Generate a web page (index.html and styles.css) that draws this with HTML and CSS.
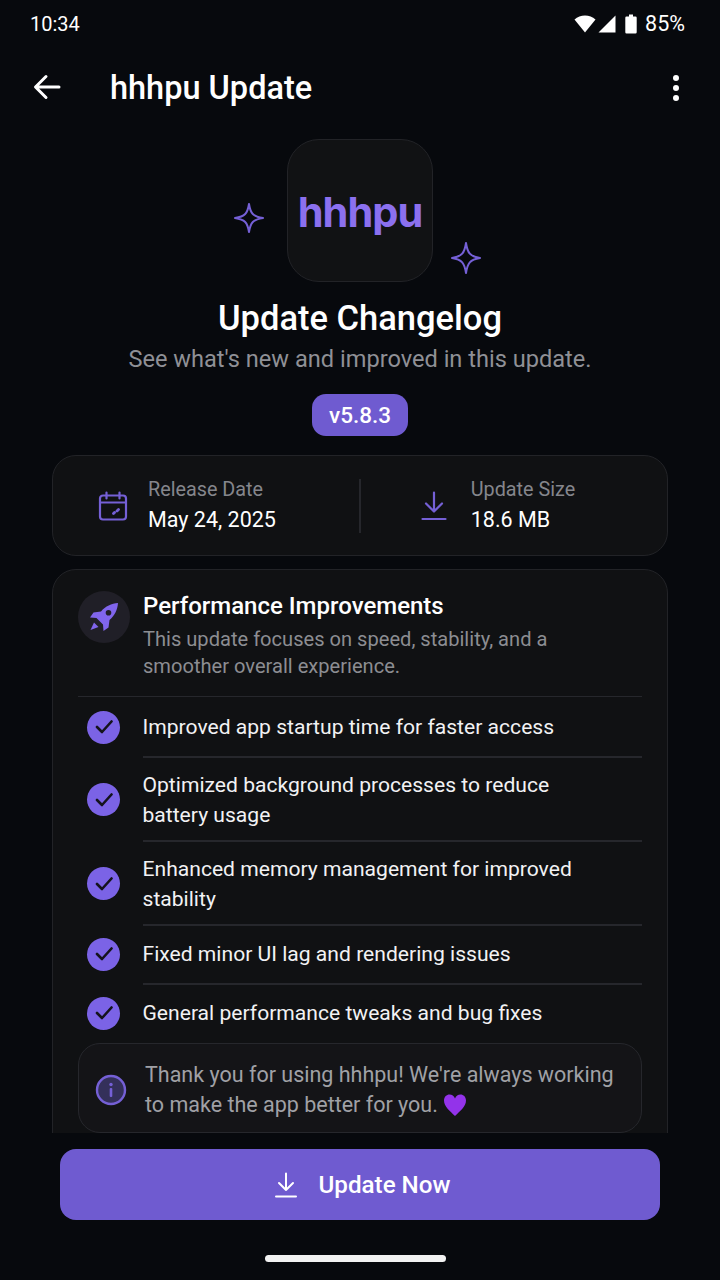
FILE: index.html
```html
<!DOCTYPE html>
<html lang="en">
<head>
  <meta charset="UTF-8" />
  <meta name="viewport" content="width=device-width, initial-scale=1.0"/>
  <title>hhhpu Update</title>
  <link rel="stylesheet" href="styles.css">
</head>
<body>
  <div class="status-bar">
    <span class="time">10:34</span>
    <div class="status-icons">
      <svg class="wifi" width="22" height="18" viewBox="0 0 22 18"><path d="M0.500 4.500C3.500 1.800 7 0.500 11 0.500s7.500 1.300 10.500 4L11 17.500z" fill="#fff"/></svg>
      <svg class="signal" width="18" height="18" viewBox="0 0 18 18"><path d="M17.500 0.500V17.500H0.500z" fill="#fff"/></svg>
      <svg class="batt" width="12" height="20" viewBox="0 0 12 20"><path d="M4 0.500h4v2h2.500a1.200 1.200 0 0 1 1.200 1.200V18.300a1.200 1.200 0 0 1-1.200 1.200H1.500a1.200 1.200 0 0 1-1.200-1.200V3.700a1.200 1.200 0 0 1 1.200-1.200H4z" fill="#fff"/></svg>
      <span class="battery">85%</span>
    </div>
  </div>

  <header class="toolbar">
    <svg class="back" width="28" height="26" viewBox="0 0 28 26" fill="none" stroke="#fff" stroke-width="3" stroke-linecap="round" stroke-linejoin="round"><path d="M26 13H3M13 2.500 2.500 13 13 23.500"/></svg>
    <h1>hhhpu Update</h1>
    <div class="menu"><i></i><i></i><i></i></div>
  </header>

  <main class="content">
    <div class="hero">
      <div class="logo-wrap">
        <svg class="sparkle sparkle-left" width="30" height="30" viewBox="0 0 30 30" fill="none" stroke="#7560d6" stroke-width="2" stroke-linejoin="round"><path d="M15 1C16.500 10.500 19 13.500 29 15 19 16.500 16.500 19.500 15 29 13.500 19.500 11 16.500 1 15 11 13.500 13.500 10.500 15 1z"/></svg>
        <div class="logo">hhhpu</div>
        <svg class="sparkle sparkle-right" width="30" height="32" viewBox="0 0 30 32" fill="none" stroke="#7560d6" stroke-width="2" stroke-linejoin="round"><path d="M15 1C16.500 11 19 14.500 29 16 19 17.500 16.500 21 15 31 13.500 21 11 17.500 1 16 11 14.500 13.500 11 15 1z"/></svg>
      </div>
      <h2>Update Changelog</h2>
      <p class="subtitle">See what's new and improved in this update.</p>
      <span class="version">v5.8.3</span>
    </div>

    <section class="info-card">
      <div class="info-cell">
        <svg class="info-icon" width="30" height="30" viewBox="0 0 30 30" fill="none" stroke="#7560d6" stroke-width="2.200" stroke-linecap="round" stroke-linejoin="round"><rect x="2" y="4.500" width="26" height="24" rx="3"/><path d="M2 11.500h26M8.500 1.500v6M21.500 1.500v6"/><path d="M15.500 22.500l1-1M19 20l1.500-1.500" stroke-width="2.800"/></svg>
        <div class="info-text">
          <span class="info-label">Release Date</span>
          <span class="info-value">May 24, 2025</span>
        </div>
      </div>
      <div class="info-divider"></div>
      <div class="info-cell info-cell-right">
        <svg class="info-icon" width="26" height="30" viewBox="0 0 26 30" fill="none" stroke="#7560d6" stroke-width="2.200" stroke-linecap="round" stroke-linejoin="round"><path d="M13 1.500V20M5 12.500l8 8 8-8M1.500 28h23"/></svg>
        <div class="info-text">
          <span class="info-label">Update Size</span>
          <span class="info-value">18.6 MB</span>
        </div>
      </div>
    </section>

    <section class="perf-card">
      <div class="perf-head">
        <div class="rocket">
          <svg width="30" height="30" viewBox="0 0 30 30"><path fill-rule="evenodd" d="M29 1C22.500 1.500 16.500 4 12 9.500L4.500 10.500 1 15.500 7.500 16 14 22.500 14.500 29 19.500 25.500 20.500 18C26 13.500 28.500 7.500 29 1zM19.500 8a2.800 2.800 0 1 1 0 5.600 2.800 2.800 0 0 1 0-5.600z" fill="#8065ec"/><path d="M5 20.500 9.500 25 1.500 28z" fill="#8065ec"/></svg>
        </div>
        <div class="perf-title">
          <h3>Performance Improvements</h3>
          <p>This update focuses on speed, stability, and a smoother overall experience.</p>
        </div>
      </div>

      <ul class="changes">
        <li class="one-line">
          <span class="check"><svg width="18" height="16" viewBox="0 0 18 16" fill="none" stroke="#14131c" stroke-width="2.600" stroke-linecap="round" stroke-linejoin="round"><path d="M2 8l5 5L16.500 2.500"/></svg></span>
          <span class="change-text">Improved app startup time for faster access</span>
        </li>
        <li class="two-line">
          <span class="check"><svg width="18" height="16" viewBox="0 0 18 16" fill="none" stroke="#14131c" stroke-width="2.600" stroke-linecap="round" stroke-linejoin="round"><path d="M2 8l5 5L16.500 2.500"/></svg></span>
          <span class="change-text">Optimized background processes to reduce battery usage</span>
        </li>
        <li class="two-line">
          <span class="check"><svg width="18" height="16" viewBox="0 0 18 16" fill="none" stroke="#14131c" stroke-width="2.600" stroke-linecap="round" stroke-linejoin="round"><path d="M2 8l5 5L16.500 2.500"/></svg></span>
          <span class="change-text">Enhanced memory management for improved stability</span>
        </li>
        <li class="one-line">
          <span class="check"><svg width="18" height="16" viewBox="0 0 18 16" fill="none" stroke="#14131c" stroke-width="2.600" stroke-linecap="round" stroke-linejoin="round"><path d="M2 8l5 5L16.500 2.500"/></svg></span>
          <span class="change-text">Fixed minor UI lag and rendering issues</span>
        </li>
        <li class="one-line">
          <span class="check"><svg width="18" height="16" viewBox="0 0 18 16" fill="none" stroke="#14131c" stroke-width="2.600" stroke-linecap="round" stroke-linejoin="round"><path d="M2 8l5 5L16.500 2.500"/></svg></span>
          <span class="change-text">General performance tweaks and bug fixes</span>
        </li>
      </ul>

      <div class="thanks">
        <svg class="info-round" width="32" height="32" viewBox="0 0 32 32"><circle cx="16" cy="16" r="14" fill="#34305a" stroke="#7560d6" stroke-width="2.400"/><circle cx="16" cy="10.500" r="1.700" fill="#7560d6"/><rect x="14.700" y="14" width="2.600" height="9" rx="1" fill="#7560d6"/></svg>
        <p>Thank you for using hhhpu! We're always working to make the app better for you. <svg class="heart" width="24" height="24" viewBox="0 0 24 24"><path d="M12 23C7 18 1 13.500 1 7.500 1 3.800 3.600 1.500 6.500 1.500 9 1.500 11 3 12 5.500 13 3 15 1.500 17.500 1.500 20.400 1.500 23 3.800 23 7.500 23 13.500 17 18 12 23z" fill="#9333ea"/></svg></p>
      </div>
    </section>
  </main>

  <footer class="footer">
    <button class="update-btn">
      <svg width="24" height="26" viewBox="0 0 24 26" fill="none" stroke="#fff" stroke-width="2" stroke-linecap="round" stroke-linejoin="round"><path d="M12 1.500V18M5 11l7 7 7-7M2 24.500h20"/></svg>
      Update Now
    </button>
    <div class="home-pill"></div>
  </footer>
</body>
</html>
```

FILE: styles.css
```css
* {
  box-sizing: border-box;
}

body {
  font-family: Roboto, sans-serif;
  background: #07090d;
  color: #fff;
  margin: 0;
  height: 1280px;
  overflow: hidden;
  display: flex;
  flex-direction: column;
}

.status-bar {
  height: 46px;
  padding: 1px 35px 0 30px;
  display: flex;
  justify-content: space-between;
  align-items: center;
  font-size: 20px;
}

.status-icons {
  display: flex;
  align-items: center;
}

.signal {
  margin-left: 2px;
}

.batt {
  margin-left: 9px;
}

.battery {
  margin-left: 8px;
  font-size: 21.500px;
}

.toolbar {
  height: 84px;
  padding: 0 41px 0 33px;
  display: flex;
  align-items: center;
}

.back {
  margin-top: -2px;
}

.toolbar h1 {
  margin: 0 0 0 49px;
  font-size: 32.500px;
  font-weight: 500;
  flex: 1;
}

.menu {
  display: flex;
  flex-direction: column;
  gap: 4px;
}

.menu i {
  width: 6px;
  height: 6px;
  border-radius: 50%;
  background: #fff;
}

.content {
  height: 1003px;
  overflow: hidden;
  padding: 9px 52px 0;
}

.hero {
  display: flex;
  flex-direction: column;
  align-items: center;
}

.logo-wrap {
  position: relative;
}

.logo {
  width: 146px;
  height: 143px;
  padding-top: 2px;
  background: #111214;
  border: 1.500px solid #222327;
  border-radius: 32px;
  display: flex;
  align-items: center;
  justify-content: center;
  color: #8b70ef;
  font-family: Inter, sans-serif;
  font-size: 41.500px;
  font-weight: 700;
  letter-spacing: -1px;
}

.sparkle {
  position: absolute;
}

.sparkle-left {
  left: -53px;
  top: 64px;
}

.sparkle-right {
  right: -48px;
  top: 103px;
}

.hero h2 {
  margin: 17px 0 0;
  font-size: 34.500px;
  line-height: 38px;
  font-weight: 500;
}

.subtitle {
  margin: 8px 0 0;
  font-size: 23.600px;
  line-height: 28px;
  color: #8f9096;
}

.version {
  margin-top: 21px;
  width: 96px;
  height: 42px;
  line-height: 42px;
  text-align: center;
  background: #6f5bd0;
  border-radius: 14px;
  font-size: 22.500px;
  font-weight: 500;
}

.info-card {
  margin-top: 19px;
  height: 101px;
  background: #101113;
  border: 1.500px solid #222327;
  border-radius: 24px;
  display: grid;
  grid-template-columns: 1fr auto 1fr;
  align-items: center;
}

.info-cell {
  display: flex;
  align-items: center;
  gap: 20px;
  padding-left: 45px;
}

.info-cell-right {
  padding-left: 60px;
  gap: 24px;
}

.info-icon {
  flex: none;
}

.info-divider {
  width: 1.500px;
  height: 54px;
  background: #26272c;
}

.info-text {
  display: flex;
  flex-direction: column;
  gap: 5px;
}

.info-label {
  font-size: 19.800px;
  line-height: 23px;
  color: #85868c;
}

.info-value {
  font-size: 21.500px;
  line-height: 27px;
}

.perf-card {
  margin-top: 13px;
  height: 600px;
  padding: 21px 25px 0;
  background: #101113;
  border: 1.500px solid #222327;
  border-radius: 24px;
}

.perf-head {
  display: flex;
  gap: 13px;
  padding-bottom: 16px;
  border-bottom: 1.500px solid #26272c;
}

.rocket {
  flex: none;
  width: 52px;
  height: 52px;
  border-radius: 50%;
  background: #201f27;
  display: flex;
  align-items: center;
  justify-content: center;
}

.perf-title h3 {
  margin: 0;
  font-size: 24px;
  line-height: 30px;
  font-weight: 500;
}

.perf-title p {
  margin: 5px 0 0;
  max-width: 430px;
  font-size: 20.100px;
  line-height: 27px;
  color: #8c8d92;
}

.changes {
  list-style: none;
  margin: 0;
  padding: 0;
}

.changes li {
  display: flex;
  align-items: center;
  gap: 22.500px;
  padding-left: 9px;
  font-size: 21.100px;
  line-height: 30px;
  color: #f2f2f4;
  position: relative;
}

.changes li + li::before {
  content: "";
  position: absolute;
  top: 0;
  left: 65px;
  right: 0;
  height: 1.500px;
  background: #26272c;
}

.changes .one-line {
  height: 59px;
  padding-top: 1px;
}

.changes .two-line {
  height: 84px;
  padding-top: 3px;
}

.change-text {
  max-width: 445px;
}

.check {
  flex: none;
  width: 33px;
  height: 33px;
  border-radius: 50%;
  background: #7b63e6;
  display: flex;
  align-items: center;
  justify-content: center;
}

.thanks {
  height: 90px;
  margin-top: 1px;
  border: 1.500px solid #26272c;
  border-radius: 22px;
  background: #141417;
  display: flex;
  align-items: center;
  gap: 18px;
  padding: 3px 20px 0 16px;
}

.info-round {
  flex: none;
}

.thanks p {
  margin: 0;
  font-size: 21.500px;
  line-height: 30px;
  color: #a0a1a6;
}

.heart {
  vertical-align: -5px;
}

.footer {
  flex: 1;
  padding: 16px 60px 0;
  position: relative;
}

.update-btn {
  width: 100%;
  height: 71px;
  padding-left: 10px;
  border: none;
  border-radius: 16px;
  background: #6f5bd0;
  color: #fff;
  font-family: Roboto, sans-serif;
  font-size: 24.200px;
  font-weight: 500;
  display: flex;
  align-items: center;
  justify-content: center;
  gap: 21px;
}

.home-pill {
  width: 181px;
  height: 7px;
  margin: 35px auto 0;
  transform: translateX(-5px);
  border-radius: 4px;
  background: #f2f2f2;
}
```
